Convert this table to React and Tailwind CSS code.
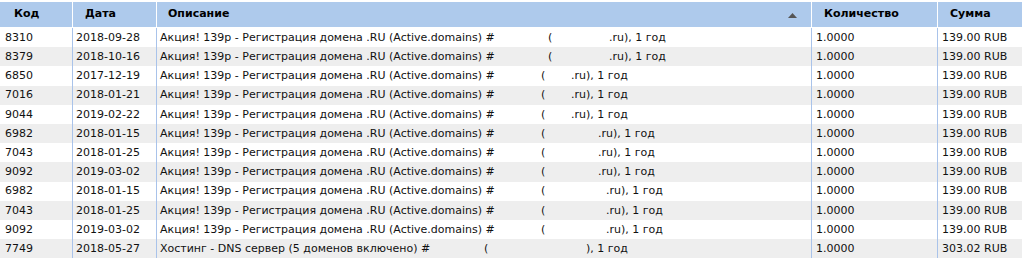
import React from 'react';

const rows = [
  { id: '8310', date: '2018-09-28', kind: 'promo', pre: 'w-[388px]', gap: 'w-[61px]', sum: '139.00 RUB' },
  { id: '8379', date: '2018-10-16', kind: 'promo', pre: 'w-[388px]', gap: 'w-[61px]', sum: '139.00 RUB' },
  { id: '6850', date: '2017-12-19', kind: 'promo', pre: 'w-[381px]', gap: 'w-[30px]', sum: '139.00 RUB' },
  { id: '7016', date: '2018-01-21', kind: 'promo', pre: 'w-[381px]', gap: 'w-[30px]', sum: '139.00 RUB' },
  { id: '9044', date: '2019-02-22', kind: 'promo', pre: 'w-[381px]', gap: 'w-[30px]', sum: '139.00 RUB' },
  { id: '6982', date: '2018-01-15', kind: 'promo', pre: 'w-[381px]', gap: 'w-[57px]', sum: '139.00 RUB' },
  { id: '7043', date: '2018-01-25', kind: 'promo', pre: 'w-[381px]', gap: 'w-[57px]', sum: '139.00 RUB' },
  { id: '9092', date: '2019-03-02', kind: 'promo', pre: 'w-[381px]', gap: 'w-[57px]', sum: '139.00 RUB' },
  { id: '6982', date: '2018-01-15', kind: 'promo', pre: 'w-[381px]', gap: 'w-[65px]', sum: '139.00 RUB' },
  { id: '7043', date: '2018-01-25', kind: 'promo', pre: 'w-[381px]', gap: 'w-[65px]', sum: '139.00 RUB' },
  { id: '9092', date: '2019-03-02', kind: 'promo', pre: 'w-[381px]', gap: 'w-[65px]', sum: '139.00 RUB' },
  { id: '7749', date: '2018-05-27', kind: 'dns', pre: 'w-[324px]', gap: 'w-[102px]', sum: '303.02 RUB' },
];

const cols = 'grid grid-cols-[73px_84px_655px_126px_1fr]';

const Description = ({ row }) => {
  if (row.kind === 'dns') {
    return (
      <span className="whitespace-nowrap">
        <span className={`inline-block ${row.pre}`}>Хостинг - DNS сервер (5 доменов включено) #</span>
        <span className={`inline-block ${row.gap}`}>(</span>
        <span>), 1 год</span>
      </span>
    );
  }
  return (
    <span className="whitespace-nowrap">
      <span className={`inline-block ${row.pre}`}>Акция! 139р - Регистрация домена .RU (Active.domains) #</span>
      <span className={`inline-block ${row.gap}`}>(</span>
      <span>.ru), 1 год</span>
    </span>
  );
};

export default function App() {
  return (
    <div className="w-[1022px] bg-white pt-[2px] text-[11px] text-[#111] font-['DejaVu_Sans',Verdana,sans-serif]">
      {/* заголовок */}
      <div className={`${cols} h-[25px] bg-[#aecaec] font-bold text-black`}>
        <div className="flex items-center pl-[14px] border-r border-white">Код</div>
        <div className="flex items-center pl-[12px] border-r border-white">Дата</div>
        <div className="flex items-center justify-between pl-[11px] pr-[14px] border-r border-white">
          <span>Описание</span>
          <svg width="9" height="5" viewBox="0 0 9 5" className="mt-[1px]">
            <polygon points="0,5 4.5,0 9,5" fill="#555" />
          </svg>
        </div>
        <div className="flex items-center pl-[12px] border-r border-white">Количество</div>
        <div className="flex items-center pl-[12px]">Сумма</div>
      </div>

      {/* строки */}
      <div className="pt-[1px]">
        {rows.map((row, i) => (
          <div key={i} className={`${cols} h-[19.2px] ${i % 2 === 1 ? 'bg-[#eeeeee]' : 'bg-white'}`}>
            <div className="flex items-center pl-[5px] pt-[1px] border-r border-[#a9c3ea]">{row.id}</div>
            <div className="flex items-center pl-[3px] pt-[1px] border-r border-[#a9c3ea]">{row.date}</div>
            <div className="flex items-center pl-[3px] pt-[1px] border-r border-[#a9c3ea] overflow-hidden">
              <Description row={row} />
            </div>
            <div className="flex items-center pl-[4px] pt-[1px] border-r border-[#a9c3ea]">1.0000</div>
            <div className="flex items-center pl-[4px] pt-[1px]">{row.sum}</div>
          </div>
        ))}
      </div>
    </div>
  );
}
